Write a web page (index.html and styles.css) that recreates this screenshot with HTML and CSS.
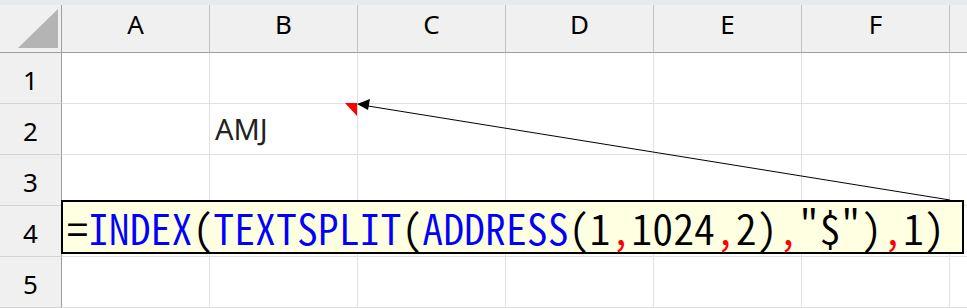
FILE: index.html
```html
<!DOCTYPE html>
<html lang="ja">
<head>
    <meta charset="UTF-8">
    <title>Sheet</title>
    <link rel="stylesheet" href="styles.css">
</head>
<body>
    <div class="topbar"></div>
    <div class="sheet">
        <div class="corner">
            <svg width="61" height="47" viewBox="0 0 61 47"><polygon points="18,43 58,4 58,43" fill="#b4b4b4"/></svg>
        </div>
        <div class="colhead">A</div>
        <div class="colhead">B</div>
        <div class="colhead">C</div>
        <div class="colhead">D</div>
        <div class="colhead">E</div>
        <div class="colhead">F</div>
        <div class="colhead last"></div>

        <div class="rowhead">1</div>
        <div class="cell"></div><div class="cell"></div><div class="cell"></div><div class="cell"></div><div class="cell"></div><div class="cell"></div><div class="cell last"></div>

        <div class="rowhead">2</div>
        <div class="cell"></div><div class="cell text">AMJ</div><div class="cell"></div><div class="cell"></div><div class="cell"></div><div class="cell"></div><div class="cell last"></div>

        <div class="rowhead">3</div>
        <div class="cell"></div><div class="cell"></div><div class="cell"></div><div class="cell"></div><div class="cell"></div><div class="cell"></div><div class="cell last"></div>

        <div class="rowhead">4</div>
        <div class="cell"></div><div class="cell"></div><div class="cell"></div><div class="cell"></div><div class="cell"></div><div class="cell"></div><div class="cell last"></div>

        <div class="rowhead">5</div>
        <div class="cell"></div><div class="cell"></div><div class="cell"></div><div class="cell"></div><div class="cell"></div><div class="cell"></div><div class="cell last"></div>

        <!-- comment marker + arrow -->
        <svg class="overlay" width="967" height="308" viewBox="0 0 967 308">
            <polygon points="345,103 357,103 357,116" fill="#ff0000"/>
            <line x1="950" y1="200" x2="368" y2="106" stroke="#000" stroke-width="1"/>
            <polygon points="357,104 370,99 368,110" fill="#000"/>
        </svg>

        <div class="formula"><span class="op">=</span><span class="fn">INDEX</span>(<span class="fn">TEXTSPLIT</span>(<span class="fn">ADDRESS</span>(1<span class="sep">,</span>1024<span class="sep">,</span>2)<span class="sep">,</span>"$")<span class="sep">,</span>1)</div>
    </div>
</body>
</html>
```

FILE: styles.css
```css
body {
    margin: 0;
    background: #fff;
    font-family: "Noto Sans", "Open Sans", sans-serif;
    overflow: hidden;
}
.topbar {
    height: 5px;
    background: #e6eaef;
}
.sheet {
    position: relative;
    display: grid;
    grid-template-columns: 62px repeat(6, 148px) 1fr;
    grid-template-rows: 48px repeat(5, 51px);
}
.corner {
    background: #f0f0f0;
    border-right: 1px solid #9e9e9e;
    border-bottom: 1px solid #9e9e9e;
}
.corner svg {
    display: block;
}
.colhead {
    background: #f0f0f0;
    border-right: 1px solid #c2c2c2;
    border-bottom: 1px solid #9e9e9e;
    display: flex;
    justify-content: center;
    align-items: center;
    padding-bottom: 9px;
    font-size: 26px;
    color: #000;
}
.colhead.last {
    border-right: none;
}
.rowhead {
    background: #f0f0f0;
    border-right: 1px solid #9e9e9e;
    border-bottom: 1px solid #d4d4d4;
    display: flex;
    justify-content: center;
    align-items: center;
    padding-top: 3px;
    font-size: 26px;
    color: #000;
}
.cell {
    border-right: 1px solid #e1e1e1;
    border-bottom: 1px solid #e1e1e1;
}
.cell.last {
    border-right: none;
}
.cell.text {
    display: flex;
    align-items: center;
    padding-left: 5px;
    padding-bottom: 2px;
    font-size: 29px;
    color: #222;
}
.overlay {
    position: absolute;
    left: 0;
    top: -5px;
}
.formula {
    position: absolute;
    left: 61px;
    top: 195px;
    width: 895px;
    height: 50px;
    border: 2px solid #000;
    background: #ffffe1;
    display: flex;
    align-items: center;
    padding-left: 4px;
    font-family: "Noto Sans CJK JP", sans-serif;
    font-feature-settings: "hwid";
    font-weight: 350;
    font-size: 41.8px;
    color: #000;
    white-space: nowrap;
}
.fn {
    color: #0000ff;
}
.sep {
    color: #ff0000;
}
```
